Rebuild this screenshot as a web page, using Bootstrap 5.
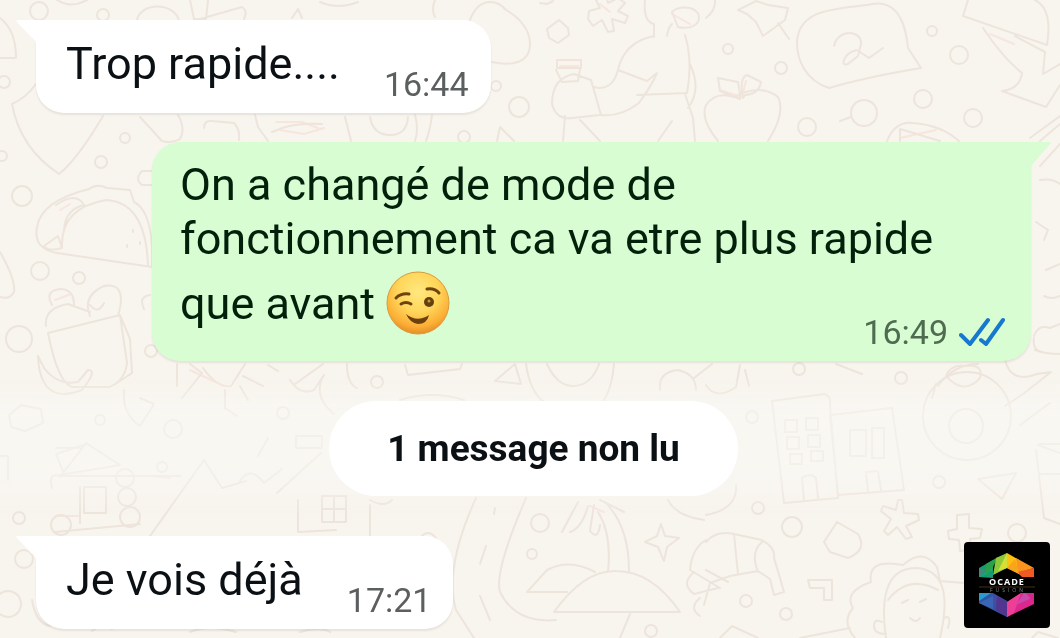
<!DOCTYPE html>
<html lang="fr">
<head>
<meta charset="utf-8">
<meta name="viewport" content="width=device-width, initial-scale=1">
<title>Discussion</title>
<link href="https://cdn.jsdelivr.net/npm/bootstrap@5.3.0/dist/css/bootstrap.min.css" rel="stylesheet">
<script src="https://cdn.jsdelivr.net/npm/bootstrap@5.3.0/dist/js/bootstrap.bundle.min.js"></script>
<style>
body { background: #f8f4ee; font-family: Roboto, "Liberation Sans", sans-serif; color: #0b1014; }
.chat { padding: 20px 29px 8px 36px; }
.wallpaper { z-index: -1; pointer-events: none; }
.bubble { background: #fff; border-radius: 28px; padding: 0 22px 0 30px; box-shadow: 0 2px 2px rgba(90, 70, 50, .1); }
.bubble-in { border-top-left-radius: 0; }
.bubble-out { background: #d8fdd2; border-top-right-radius: 0; margin: 29px 0 0 116px; padding: 0 66px 0 28px; color: #03200b; }
.tail { top: 0; width: 21px; height: 24px; fill: #fff; }
.tail-in { left: -20px; }
.tail-out { right: -20px; fill: #d8fdd2; }
.msg { font-size: 45px; line-height: 54px; padding: 17px 0 22px; }
.bubble-out .msg { display: flow-root; padding: 16px 0 0; }
.stamp { font-size: 34px; line-height: 40px; padding-bottom: 9px; color: #5c5f5f; }
.bubble-out .stamp { color: #4f6c51; margin: 46px -40px 0 0; }
.bubble-in .stamp { margin-left: 44px; }
.emoji { width: 64px; height: 64px; margin-top: 5px; vertical-align: -16px; }
.ticks { width: 46px; height: 30px; margin-left: 11px; }
.unread { background: #fff; border-radius: 48px; margin: 40px 0; padding: 22px 58px; font-size: 37px; line-height: 51px; font-weight: 700; }
.brand-mark { right: 10px; bottom: 10px; width: 86px; height: 86px; }
</style>
</head>
<body>
<svg class="wallpaper position-fixed top-0 start-0 w-100 h-100" viewBox="0 0 1060 638" preserveAspectRatio="xMidYMid slice" aria-hidden="true">
  <defs>
    <linearGradient id="glow" x1="0" y1="0" x2="0" y2="1">
      <stop offset="0" stop-color="#fafaf7" stop-opacity="0"/><stop offset=".25" stop-color="#fafaf7" stop-opacity=".5"/>
      <stop offset=".7" stop-color="#fafaf7" stop-opacity=".5"/><stop offset="1" stop-color="#fafaf7" stop-opacity="0"/>
    </linearGradient>
  </defs>
  <g fill="none" stroke="#ede5dc" stroke-width="2" stroke-linejoin="round" stroke-linecap="round">
    <!-- loose rings -->
    <circle cx="39" cy="11" r="9"/><circle cx="103" cy="15" r="6"/><circle cx="4" cy="82" r="6"/><circle cx="125" cy="138" r="5"/>
    <circle cx="101" cy="162" r="6"/><circle cx="2" cy="156" r="5"/><circle cx="22" cy="196" r="10"/><circle cx="40" cy="271" r="9"/>
    <circle cx="79" cy="278" r="6"/><circle cx="19" cy="339" r="13"/><circle cx="151" cy="351" r="6"/><circle cx="496" cy="86" r="5"/>
    <circle cx="519" cy="107" r="10"/><circle cx="464" cy="137" r="6"/><circle cx="728" cy="49" r="5"/><circle cx="781" cy="68" r="6"/>
    <circle cx="932" cy="31" r="5"/><circle cx="959" cy="55" r="9"/><circle cx="923" cy="99" r="9"/><circle cx="973" cy="118" r="9"/>
    <circle cx="864" cy="113" r="13"/><path d="M851 117l-11 4"/><circle cx="807" cy="127" r="9"/>
    <circle cx="100" cy="420" r="5"/><circle cx="173" cy="429" r="9"/><circle cx="162" cy="467" r="5"/><circle cx="283" cy="413" r="6"/>
    <circle cx="377" cy="382" r="6"/><circle cx="19" cy="518" r="6"/><circle cx="24" cy="559" r="9"/><circle cx="8" cy="604" r="13"/>
    <circle cx="540" cy="523" r="9"/><circle cx="532" cy="554" r="5"/><circle cx="901" cy="378" r="6"/><circle cx="799" cy="369" r="6"/>
    <circle cx="792" cy="527" r="10"/><circle cx="758" cy="508" r="6"/><circle cx="752" cy="417" r="6"/><circle cx="939" cy="482" r="6"/>
    <circle cx="746" cy="601" r="6"/><circle cx="786" cy="614" r="6"/><circle cx="1017" cy="533" r="9"/><circle cx="651" cy="631" r="6"/>
    <!-- top edge -->
    <path d="M0 18q16 12 16 40M0 58h14M57 0q14 9 30 0M137 20c4-18 36-18 42 0M190 0l4 19h12l2-19M200 19l42-12q6 4 2 12M292 18l6-9 4 9M320 2q18 8 38 0"/>
    <path d="M12 104q8 44 47 70 18-14 44-58M12 104q14-6 24-20M140 117l22 24q10 3 18-2 6-10-2-24M204 128q0-8 8-7l22 2q6 6 5 17M255 115l3 12 10 14M272 132q20-10 50-8M345 117l6 24M370 117q3 18 20 18t18-18M415 115q4 14 0 26M432 115q-2 16-6 26"/>
    <path d="M470 20c8-22 26-22 36-10 14 8 24 20 24 34 0 20-20 22-38 18M435 0q-4 10 0 17M547 29l12-9 9 8 1 7-11 8-9-5zM540 3l7 1 6-3M497 141l3-14 14 14"/>
    <path d="M596 0l4 8-11 3-1 8 5 7 9-6 6 12 6-1-2-12 13 4 3-7-10-5 7-8-7-5-10 5-2-8z"/>
    <!-- cook with mixer -->
    <path d="M645 0q-2 22 9 24v13M672 24q-4 4-5 12M672 12q6-6 18-4 12 4 8 14-6 8-20 5zM654 36q-30 6-36 34l29 11 10-8q-5 12-18 30-18 14-38 12l-10-35-17-6q-22 4-22 30 4 16 20 14l28-3M685 35q8 26 2 58l-50 2M690 64q12 26-2 44M685 94l8 24 2 23M565 116l-2 25M580 120l20 21M672 121l-14 20M618 70q-6 22-24 17M557 60h24v8h-24zM556 70l6 12 16-1 2-12"/>
    <!-- apple, bird, speech bubble, aircraft -->
    <path d="M718 141q-18-22-12-36 10-14 28-8 26-14 44 0 8 16-10 44M740 99l-20-8-2-13 20 4 2 12zM743 98q-4-20 4-23l14 7q-2 12-16 13zM738 10l18-9 12 4 20 3-3 12-22 16-7-14-9-8zM778 23l11 16M706 18q10-8 9-18"/>
    <path d="M872 4c28-4 34 24 36 44l13 20c-24 4-58 10-92 20-24-8-32-28-32-46 2-36 44-32 75-38zM834 46c4-18 28-16 27-2l-3 12-10 8q-6 2-4-4 3-8 13-10l12 8 14-10M968 0l-5 16 84 29q6-36-12-45M983 28q20 30 39 45-2 16-20 18l44 16 14-22M1015 36l30 16-2 22 17-10M887 141q8-20 26-18 28 2 46 18M900 141v-12l40 12M1030 138l30-22M1040 141l20-17"/>
    <!-- taco and shopping bag -->
    <path d="M152 267l-95-14q-24-4-20-26 4-26 52-38 8-6 18-1l23 2 4 12q20 10 18 65zM62 248q-2-40 44-48 40 2 42 66M56 205q20-14 28 0-18 4-20 24M44 246l14-10 4 12q-14 4-18-2zM127 245v2M140 242v2M133 230v2"/>
    <path d="M48 333l72-18 7 48q-2 18-18 24H72q-14-4-24-54zM120 315l10 24 2 34-18 12M46 326q-2-18 22-22l22 8M52 305q-8-14 8-16 14 0 14 16M90 316q-8-20 14-30 24-4 14 30M90 305q8 10 14-2M38 356q2 50 44 34 16-20 6-20l-10 12q-20 4-34-14zM0 252q16 28 14 40-4 8-14 5M152 171h-10q-8 8 0 14h10M150 295q-12 2-6 14"/>
    <!-- below the green bubble -->
    <path d="M177 364v22M182 398l20-25-12-9M203 368q14 20 28 18l14-22M240 386l8 14M243 376l20 10M225 390v18l12 8M295 384l28-20M290 380q10 16 24 10l10-15M322 378q-8 20 12 36M347 364q0 20 10 24M268 365l10 6M405 365l3 10 52-6 2-5M495 381l20-17 6 20zM526 364q4 28 18 38M547 364q10 22 26 22 18 0 26-22M614 364q-2 24-10 36M660 390q-2-18 18-20 18 4 18 20M694 378l18-14M400 400q32-10 64 0M706 385q10 16 30 2l4-22M836 364l26 10M745 370l4 16M978 364q-24 0-40 22M1005 360q6 24 32 14l14-2-28 22-18 12M1035 350q10 4 25 4M1020 425l30-22"/>
    <!-- lodge -->
    <path d="M52 488q-4-16 8-12h120M55 532l85-8M64 474l-8-20 31-10M56 448h24M60 477l26-34 34 22-60 10M80 487v36M84 487h22v26H84zM9 415l12-10 20 4 2 14-18 8-14-4zM124 390q-2 24 16 36l14-22-14-6M150 536l54-76 18 28 24-7M298 500v32l38-2M322 496h24v26h-24zM334 496v26M322 509h24M277 493l44-40M296 436h26v12h-26zM0 456h8v24M240 481q10-16 24 2l18-14M258 456l10-18"/>
    <circle cx="125" cy="478" r="9"/><circle cx="127" cy="497" r="9"/><circle cx="130" cy="517" r="10"/><circle cx="61" cy="525" r="10"/>
    <!-- avocado, dishes, palm, croissant -->
    <path d="M476 498q-32 70-20 112l18 28M526 498q-32 74-26 94 16 32 56 28M495 508l-1 6M486 546l-6 18M480 596l10 24M370 505v32M370 500q14 8 22 0M420 538q8-10 16 0M527 592l20-22q22-12 48 2M527 592h40M554 612q30-42 62-41 36 0 64 41zM562 532l16-30M570 532q12-4 18-26M594 505l-4 26q8 10 10-6M598 512q14 22 10 60M605 502q24 24 24 69M600 500l24 12M620 638l10-24M661 524l4 12 14 2-12 9-3 14-6-14-13-5 12-6zM668 500q8 16 36 20M706 515q32-6 30-30M32 600q4 24 18 26M92 631q10-8 20-2M190 632q20-8 46 0M300 632q20-6 30 0"/>
    <path d="M706 540q-14 8-16 30l30 18M706 542q10-12 28-8l28 6q14 8 12 18l6 20 4 14-10 3-4-16-12-8-28 5-20 7-6 22M734 534l4 40M706 570l22 12M694 572q-14 12 0 22l24-6M700 598q-12 10 0 18M762 542q-12 10-4 30M720 638l12-12 26 12M808 580h24v20h-8v-12h-14zM800 638l50-10"/>
    <!-- buildings -->
    <path d="M784 503l-12-102 52-7q8 2 6 12l8 92zM838 495l-8-80 62-7 12 82zM785 420h12v12h-12zM806 418h12v12h-12zM787 437h12v12h-12zM808 435h12v12h-12zM790 454h12v10h-12zM811 451h12v10h-12zM804 500l-2-22q8-6 14 0l2 20M850 430h16v26h-16zM872 428h12v30h-12zM868 492l-2-20 12-1 3 19"/>
    <circle cx="967" cy="416" r="44"/><circle cx="966" cy="426" r="17"/><path d="M946 376q4-12 20-10 18-2 14 12-16 18-34-2zM932 398l4-14M1040 444h20M1036 450l8 68 16 6M1038 445l22 8M1040 474h20M978 479l38-6-14 26z"/>
    <path d="M837 522l-13 20 6 10 18 6q20-8 10-24zM902 500l2 13 14 1 1 6-13 6 6 11-6 2-9-12-9 8-4-4 7-12-10-8 2-5 13 4 2-10zM957 515l12-1v14l13 1-2 9-10 1 1 11-11 1-1-11-10-1-1-8 9-2z"/>
    <!-- child with curly hair -->
    <path d="M855 638q-14-16-2-30-10-16 18-26-4-24 32-17 20-18 34 2l3 14 24 2M886 638q-10-70 30-70 40 2 24 70M888 600q20-26 50-10M882 622q-8-4-8 4t12 8M944 618q8-4 4 10M902 603l6-3M920 602l6-3M910 618q6 6 10 0M1030 640l8-8 20 6"/>
    <!-- right of the green bubble -->
    <path d="M1034 336q4-12 16-8l10-4M1034 338q-2 12 8 14M1040 180q12-2 20 4M1036 222l12 8-4 10M1046 270l14-6M1040 166l20-22M1044 296q8 4 16 0"/>
  </g>
  <g fill="none" stroke="#f5e2d9" stroke-width="2" stroke-linecap="round" opacity=".8">
    <path d="M276 122h26l16 6M280 130l24 4 20-6M558 60h22M560 66h18M60 210l10-6M55 300l16-6M720 90l18 6M742 97l4-16M990 34l24 10M150 476l20 2M58 516h20M190 370l34 16M900 138l36-8M600 4l10 8M672 14l18 10M590 506l14 6"/>
  </g>
  <rect y="375" width="1060" height="140" fill="url(#glow)"/>
</svg>

<main class="chat d-flex flex-column align-items-start">
  <article class="bubble bubble-in position-relative d-flex align-items-end">
    <svg class="tail tail-in position-absolute" viewBox="0 0 21 24" aria-hidden="true"><path d="M21 0H2Q-1 0 1 2L15 17Q20 20 20 24h1z"/></svg>
    <p class="msg mb-0">Trop rapide....</p>
    <time class="stamp" datetime="16:44">16:44</time>
  </article>

  <article class="bubble bubble-out position-relative align-self-stretch">
    <svg class="tail tail-out position-absolute" viewBox="0 0 21 24" aria-hidden="true"><path d="M0 0H19Q22 0 20 2L1 24H0z"/></svg>
    <div class="msg">
      <span>On a changé de mode de fonctionnement ca va etre plus rapide que avant</span>
      <svg class="emoji" viewBox="0 0 64 64" role="img" aria-label="Clin d’œil">
        <defs><radialGradient id="face" cx=".5" cy=".32" r=".66"><stop offset="0" stop-color="#ffe880"/><stop offset=".5" stop-color="#ffd65a"/><stop offset=".85" stop-color="#fcae35"/><stop offset="1" stop-color="#e8922d"/></radialGradient></defs>
        <circle cx="32" cy="32" r="31" fill="url(#face)" stroke="#d99b3c" stroke-width="1"/>
        <g fill="none" stroke="#6d4410" stroke-linecap="round" stroke-width="3"><path d="M10 27q5-5 13-4M41 18q8-1 12 4"/><path d="M15 33q5-3 10 0"/></g>
        <circle cx="43" cy="31" r="5" fill="#65400f"/><circle cx="43" cy="30" r="1.5" fill="#c9963e"/>
        <path d="M20 43q11 9 23 1-2 9-11 9-8-1-12-10z" fill="#6b3f10"/>
      </svg>
      <div class="stamp float-end d-flex align-items-center">
        <time datetime="16:49">16:49</time>
        <svg class="ticks" viewBox="0 0 46 30" fill="none" stroke="#1679cf" stroke-width="4" stroke-linecap="round" stroke-linejoin="round" role="img" aria-label="Lu"><path d="M2 18l9 9L29 3M22 23l5 4L44 3"/></svg>
      </div>
    </div>
  </article>

  <div class="unread align-self-center text-center" role="status">1 message non lu</div>

  <article class="bubble bubble-in position-relative d-flex align-items-end">
    <svg class="tail tail-in position-absolute" viewBox="0 0 21 24" aria-hidden="true"><path d="M21 0H2Q-1 0 1 2L15 17Q20 20 20 24h1z"/></svg>
    <p class="msg mb-0">Je vois déjà</p>
    <time class="stamp" datetime="17:21">17:21</time>
  </article>
</main>

<svg class="brand-mark position-fixed" viewBox="0 0 86 86" role="img" aria-label="Ocade Fusion">
  <rect width="86" height="86" rx="4" fill="#000"/>
  <path d="M15 26l14-8v18l-14-1z" fill="#169c74"/><path d="M15 35l14-9-7-3 7-4-1 9z" fill="#37b58c"/>
  <path d="M15 26l7 2-7 7z" fill="#47867b"/><path d="M22 22l12-7-6 12-6 6z" fill="#29a34a"/>
  <path d="M32 16l11-5v15l-14 7z" fill="#8fc93a"/><path d="M43 11v15l-9 3z" fill="#d4df38"/>
  <path d="M43 11l12 7 2 15-14-7z" fill="#fdc20f"/><path d="M52 16l18 10-16 5z" fill="#f9951f"/><path d="M70 26v9H58l-5-5z" fill="#ef5b23"/><path d="M43 26l8-9 4 15z" fill="#f8a51b"/>
  <path d="M15 51h14l14 8v16L15 61z" fill="#3054a5"/><path d="M15 51h12l-12 8z" fill="#2a9bd2"/><path d="M27 52l8 3-6 12z" fill="#4b4aa2"/><path d="M33 54l10 6v15l-11-7z" fill="#51358f"/><path d="M15 61l14-7v13z" fill="#3865b4"/>
  <path d="M43 60l14-9h13v11L43 75z" fill="#dd278c"/><path d="M57 51l-7 20-7 4V60z" fill="#ee3f97"/><path d="M60 51l10 4-18 8z" fill="#c64bac"/><path d="M70 51v10l-8-10z" fill="#d8258c"/>
  <path d="M15 45h56" stroke="#57491d" stroke-width=".7"/>
  <text x="43" y="43" text-anchor="middle" font-family="Open Sans, sans-serif" font-weight="700" font-size="9" letter-spacing="1" fill="#fff">OCADE</text>
  <text x="44" y="50" text-anchor="middle" font-family="Open Sans, sans-serif" font-size="5" letter-spacing="3" fill="#858585">FUSION</text>
</svg>
</body>
</html>
